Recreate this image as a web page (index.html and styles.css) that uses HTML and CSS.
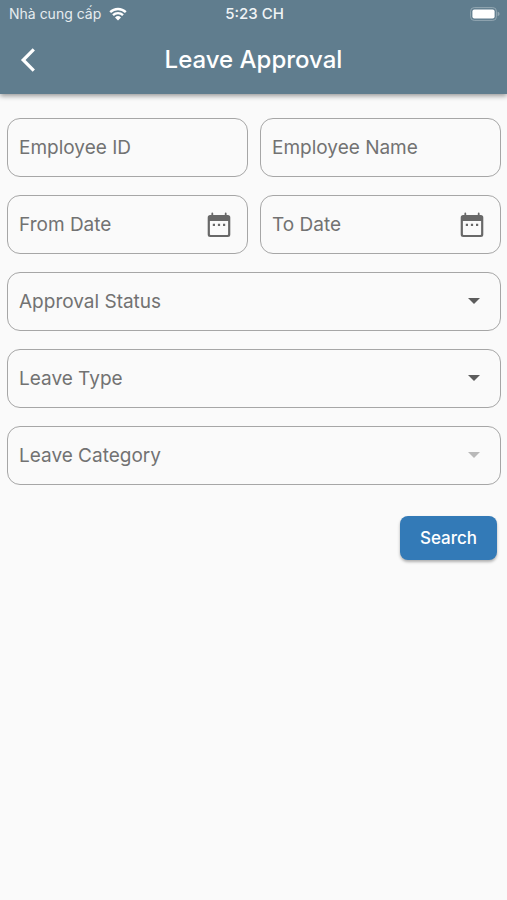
FILE: index.html
```html
<!DOCTYPE html>
<html lang="en">
<head>
<meta charset="utf-8">
<meta name="viewport" content="width=device-width, initial-scale=1">
<title>Leave Approval</title>
<link rel="stylesheet" href="styles.css">
</head>
<body>
<header class="app-header">
  <div class="status-bar">
    <div class="carrier">
      <span lang="vi">Nhà cung cấp</span>
      <svg class="wifi" viewBox="0 0 18 14" aria-hidden="true">
        <path d="M1.2 5.2a11.2 11.2 0 0 1 15.6 0M4 8.1a7.2 7.2 0 0 1 10 0"/>
        <path class="wifi-dot" d="M9 13.4 6 10.4a4.3 4.3 0 0 1 6 0z"/>
      </svg>
    </div>
    <span class="clock">5:23 CH</span>
    <svg class="battery" viewBox="0 0 30 14" aria-hidden="true">
      <rect class="battery-shell" x=".6" y=".6" width="25.8" height="12.8" rx="3.6"/>
      <rect class="battery-level" x="2.4" y="2.4" width="22.2" height="9.2" rx="2"/>
      <path class="battery-tip" d="M27.6 4.8c2.6.6 2.6 3.8 0 4.4z"/>
    </svg>
  </div>
  <div class="title-bar">
    <button class="back" type="button" aria-label="Back">
      <svg viewBox="0 0 16 24" aria-hidden="true"><path d="M13.8 1.4 3.2 12l10.600 10.600"/></svg>
    </button>
    <h1 class="title">Leave Approval</h1>
  </div>
</header>
<main>
  <form class="filters">
    <div class="field">
      <input class="control" type="text" placeholder="Employee ID" aria-label="Employee ID">
    </div>
    <div class="field">
      <input class="control" type="text" placeholder="Employee Name" aria-label="Employee Name">
    </div>
    <div class="field">
      <input class="control" type="text" placeholder="From Date" aria-label="From Date">
      <svg class="calendar" viewBox="0 0 24 26" aria-hidden="true">
        <path fill-rule="evenodd" d="M4.4 1.400a.8.8 0 0 1 1.800 0V3h11.600V1.400a.8.8 0 0 1 1.800 0V3h1.200A2.500 2.500 0 0 1 23.300 5.500v17a2.500 2.500 0 0 1-2.500 2.500H3.200A2.500 2.500 0 0 1 .7 22.500v-17A2.500 2.500 0 0 1 3.200 3h1.200zM2.900 9v13.200a.7.7 0 0 0 .7.7h16.800a.7.7 0 0 0 .7-.7V9z"/>
        <path d="M5.800 11.800H8V14H5.800zm5.100 0h2.200V14h-2.200zm5.100 0h2.200V14H16z"/>
      </svg>
    </div>
    <div class="field">
      <input class="control" type="text" placeholder="To Date" aria-label="To Date">
      <svg class="calendar" viewBox="0 0 24 26" aria-hidden="true">
        <path fill-rule="evenodd" d="M4.4 1.400a.8.8 0 0 1 1.800 0V3h11.600V1.400a.8.8 0 0 1 1.800 0V3h1.200A2.500 2.500 0 0 1 23.300 5.500v17a2.500 2.500 0 0 1-2.500 2.500H3.200A2.500 2.500 0 0 1 .7 22.500v-17A2.500 2.500 0 0 1 3.200 3h1.200zM2.900 9v13.200a.7.7 0 0 0 .7.7h16.800a.7.7 0 0 0 .7-.7V9z"/>
        <path d="M5.800 11.800H8V14H5.800zm5.100 0h2.200V14h-2.200zm5.100 0h2.200V14H16z"/>
      </svg>
    </div>
    <div class="field wide">
      <select class="control" aria-label="Approval Status"><option>Approval Status</option></select>
      <svg class="arrow" viewBox="0 0 12 8" aria-hidden="true"><path d="M0 0h12L6 6z"/></svg>
    </div>
    <div class="field wide">
      <select class="control" aria-label="Leave Type"><option>Leave Type</option></select>
      <svg class="arrow" viewBox="0 0 12 8" aria-hidden="true"><path d="M0 0h12L6 6z"/></svg>
    </div>
    <div class="field wide">
      <select class="control" aria-label="Leave Category" disabled><option>Leave Category</option></select>
      <svg class="arrow arrow-disabled" viewBox="0 0 12 8" aria-hidden="true"><path d="M0 0h12L6 6z"/></svg>
    </div>
    <button class="search" type="submit">Search</button>
  </form>
</main>
</body>
</html>
```
FILE: styles.css
```css
* {
  box-sizing: border-box;
}

body {
  margin: 0;
  min-height: 100vh;
  background: #fafafa;
  color: #727272;
  font-family: Inter, "Liberation Sans", sans-serif;
}

.app-header {
  background: #607d8e;
  color: #fff;
  box-shadow: 0 2px 5px rgba(0, 0, 0, 0.4);
}

.status-bar {
  display: grid;
  grid-template-columns: 1fr auto 1fr;
  align-items: center;
  height: 28px;
  padding: 0 7px 0 9px;
  font-size: 14px;
  line-height: 20px;
}

.carrier {
  display: flex;
  align-items: center;
  gap: 8px;
  color: #e6ecef;
}

.wifi {
  width: 18px;
  height: 14px;
  fill: none;
  stroke: #fff;
  stroke-width: 2.4;
}

.wifi-dot {
  fill: #fff;
  stroke: none;
}

.clock {
  font-size: 15px;
  font-weight: 500;
  color: #f0f4f6;
}

.battery {
  justify-self: end;
  width: 30px;
  height: 14px;
  fill: #fff;
}

.battery-shell {
  fill: none;
  stroke: #93a7b2;
}

.battery-tip {
  fill: #93a7b2;
}

.title-bar {
  display: grid;
  grid-template-columns: 56px 1fr 56px;
  align-items: center;
  height: 66px;
  padding-bottom: 2px;
}

.back {
  display: flex;
  align-items: center;
  justify-content: center;
  height: 48px;
  padding: 0;
  border: 0;
  background: none;
}

.back svg {
  width: 16px;
  height: 24px;
  fill: none;
  stroke: #fff;
  stroke-width: 3.2;
}

.title {
  margin: 0;
  font-size: 24px;
  line-height: 32px;
  font-weight: 500;
  text-align: center;
}

.filters {
  display: grid;
  grid-template-columns: 1fr 1fr;
  gap: 18px 12px;
  padding: 24px 6px 24px 7px;
}

.field {
  display: grid;
  align-items: center;
}

.field > * {
  grid-area: 1 / 1;
}

.wide {
  grid-column: 1 / -1;
}

.control {
  appearance: none;
  width: 100%;
  min-width: 0;
  height: 59px;
  padding: 0 11px;
  border: 1px solid #a6a6a6;
  border-radius: 13px;
  background: transparent;
  color: #727272;
  font-family: inherit;
  font-size: 19px;
  line-height: 24px;
  opacity: 1;
}

.control::placeholder {
  color: #727272;
  opacity: 1;
}

.calendar {
  justify-self: end;
  width: 24px;
  height: 26px;
  margin-right: 17px;
  fill: #686868;
  pointer-events: none;
}

.arrow {
  justify-self: end;
  width: 12px;
  height: 8px;
  margin-right: 21px;
  fill: #5c5c5c;
  pointer-events: none;
}

.arrow-disabled {
  fill: #b9b9b9;
}

.search {
  grid-column: 1 / -1;
  justify-self: end;
  height: 44px;
  margin: 13px 4px 0 0;
  padding: 0 20px;
  border: 0;
  border-radius: 8px;
  background: #337ab7;
  box-shadow: 0 2px 3px rgba(0, 0, 0, 0.3);
  color: #fff;
  font-family: inherit;
  font-size: 17px;
  line-height: 24px;
  font-weight: 500;
}
```
